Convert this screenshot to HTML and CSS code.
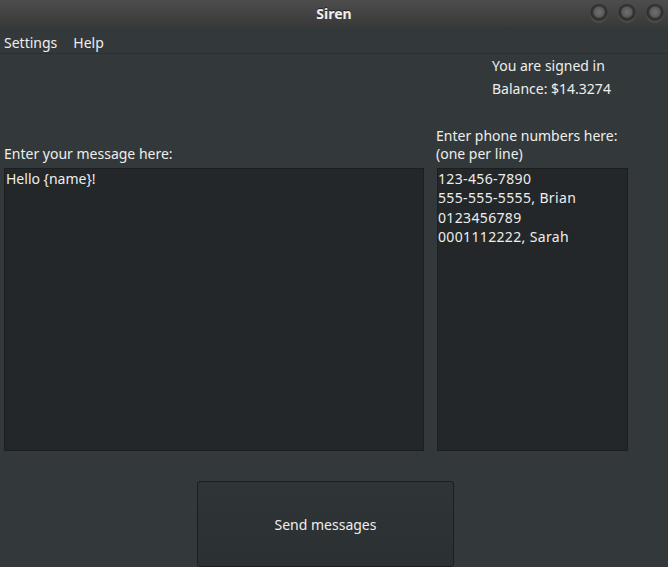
FILE: index.html
```html
<!DOCTYPE html>
<html>
<head>
<meta charset="utf-8">
<title>Siren</title>
<link rel="stylesheet" href="styles.css">
</head>
<body>
<div class="window">
  <div class="titlebar">
    <div class="title">Siren</div>
    <div class="wbtns">
      <span class="wbtn"></span>
      <span class="wbtn"></span>
      <span class="wbtn"></span>
    </div>
  </div>
  <div class="menubar">
    <span class="menu-item">Settings</span>
    <span class="menu-item">Help</span>
  </div>
  <div class="main">
    <div class="status">
      <div class="status-line">You are signed in</div>
      <div class="status-line">Balance: $14.3274</div>
    </div>
    <div class="fields">
      <div class="col col-left">
        <div class="label">Enter your message here:</div>
        <div class="box box-left">Hello {name}!</div>
      </div>
      <div class="col col-right">
        <div class="label">Enter phone numbers here:<br>(one per line)</div>
        <div class="box box-right">123-456-7890<br>555-555-5555, Brian<br>0123456789<br>0001112222, Sarah</div>
      </div>
    </div>
    <div class="actions">
      <div class="send-btn">Send messages</div>
    </div>
  </div>
</div>
</body>
</html>
```
FILE: styles.css
```css
html, body {
  margin: 0;
  padding: 0;
  background: #33393b;
}
body {
  width: 668px;
  height: 567px;
  overflow: hidden;
  font-family: "Noto Sans", "DejaVu Sans", sans-serif;
  font-size: 14px;
  color: #eeeeec;
}
.window {
  display: flex;
  flex-direction: column;
  height: 567px;
}
.titlebar {
  height: 28px;
  flex: 0 0 28px;
  background: linear-gradient(#4d4d4d, #383838);
  display: flex;
  align-items: center;
  justify-content: center;
  position: relative;
}
.title {
  font-weight: bold;
  font-size: 14px;
  color: #eeeeec;
  text-shadow: 0 -1px 0 #222;
  margin-top: -1px;
}
.wbtns {
  position: absolute;
  right: 4px;
  top: 4px;
  display: flex;
  gap: 10px;
}
.wbtn {
  width: 18px;
  height: 18px;
  border-radius: 50%;
  background: radial-gradient(circle at 50% 45%, #707070 0, #5a5a5a 5px, #3a3a3a 6px, #2c2c2c 8px, #4a4a4a 9px);
  box-shadow: 0 1px 0 #505050;
}
.menubar {
  height: 26px;
  flex: 0 0 26px;
  box-sizing: border-box;
  display: flex;
  align-items: center;
  padding: 4px 0 0 4px;
  gap: 16px;
  border-bottom: 1px solid #2b3032;
  background: #33393b;
}
.menu-item {
  line-height: 20px;
}
.main {
  flex: 1;
  display: flex;
  flex-direction: column;
  padding: 0 4px;
}
.status {
  padding: 0 0 0 488px;
  height: 73px;
}
.status-line {
  line-height: 23px;
}
.fields {
  display: flex;
  gap: 12px;
  align-items: flex-end;
}
.col {
  display: flex;
  flex-direction: column;
}
.col-left {
  width: 420px;
}
.col-right {
  width: 191px;
}
.label {
  line-height: 18px;
  padding-bottom: 5px;
}
.box {
  background: #232729;
  border: 1px solid #1c1f20;
  height: 281px;
  line-height: 19.3px;
  padding: 0 0 0 1px;
  box-sizing: content-box;
}
.box-right {
  margin-left: 1px;
  width: 189px;
  padding-left: 0;
  letter-spacing: 0.35px;
}
.actions {
  display: flex;
  padding-top: 30px;
  padding-left: 193px;
}
.send-btn {
  width: 255px;
  height: 84px;
  border: 1px solid #1b1f20;
  border-radius: 3px;
  background: linear-gradient(#2f3537, #2b3133);
  display: flex;
  align-items: center;
  justify-content: center;
  color: #eeeeec;
}
```
